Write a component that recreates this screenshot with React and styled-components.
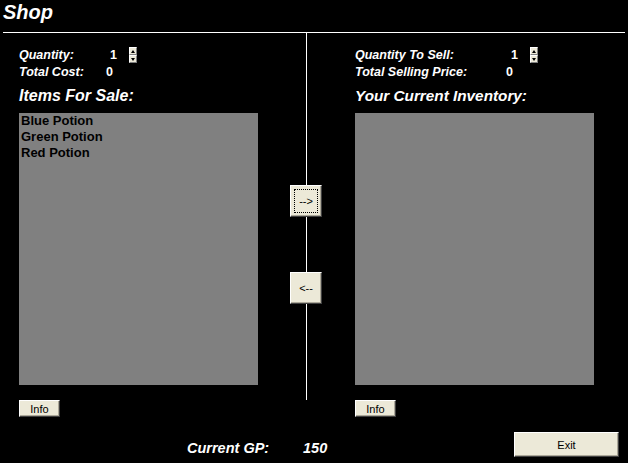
import React, { useState } from "react";
import styled, { createGlobalStyle } from "styled-components";

const items = ["Blue Potion", "Green Potion", "Red Potion"];

const Spinner = () => (
  <SpinBox>
    <SpinBtn>
      <svg width="4" height="3" viewBox="0 0 4 3">
        <polygon points="2,0 4,3 0,3" fill="#000" />
      </svg>
    </SpinBtn>
    <SpinBtn>
      <svg width="4" height="3" viewBox="0 0 4 3">
        <polygon points="0,0 4,0 2,3" fill="#000" />
      </svg>
    </SpinBtn>
  </SpinBox>
);

const App = () => {
  const [buyQty] = useState(1);
  const [sellQty] = useState(1);

  return (
    <Wrapper>
      <GlobalStyle />
      <Header>
        <Title>Shop</Title>
      </Header>
      <Rule />
      <Main>
        <Panel $left={19}>
          <StatRow>
            <Label $width={91}>Quantity:</Label>
            <Value>{buyQty}</Value>
            <Spinner />
          </StatRow>
          <StatRow>
            <Label $width={87}>Total Cost:</Label>
            <Value>0</Value>
          </StatRow>
          <Heading>Items For Sale:</Heading>
          <ListBox>
            {items.map(cv => (
              <ListItem key={cv}>{cv}</ListItem>
            ))}
          </ListBox>
          <SmallButton>Info</SmallButton>
        </Panel>

        <Divider>
          <ArrowButton $focused>--&gt;</ArrowButton>
          <ArrowButton>&lt;--</ArrowButton>
        </Divider>

        <Panel $left={33}>
          <StatRow>
            <Label $width={156}>Quantity To Sell:</Label>
            <Value>{sellQty}</Value>
            <Spinner />
          </StatRow>
          <StatRow>
            <Label $width={151}>Total Selling Price:</Label>
            <Value>0</Value>
          </StatRow>
          <Heading $size={15.3}>Your Current Inventory:</Heading>
          <ListBox />
          <SmallButton>Info</SmallButton>
        </Panel>
      </Main>
      <Footer>
        <GoldLabel>Current GP:</GoldLabel>
        <GoldValue>150</GoldValue>
        <ExitButton>Exit</ExitButton>
      </Footer>
    </Wrapper>
  );
};

export default App;

// styled components
const GlobalStyle = createGlobalStyle`
  html, body {
    margin: 0;
    padding: 0;
    background: #000;
  }
`;

const Wrapper = styled.div`
  width: 628px;
  height: 463px;
  background: #000;
  color: #fff;
  font-family: "Liberation Sans", Arial, sans-serif;
  overflow: hidden;
  display: flex;
  flex-direction: column;
`;

const Header = styled.div`
  height: 32px;
  padding-left: 3px;
  box-sizing: border-box;
`;

const Title = styled.h1`
  margin: 0;
  font-size: 20px;
  line-height: 24px;
  font-weight: bold;
  font-style: italic;
`;

const Rule = styled.div`
  height: 1px;
  margin: 0 3px;
  background: #fff;
`;

const Main = styled.div`
  display: grid;
  grid-template-columns: 290px 32px 1fr;
  align-items: start;
`;

const Panel = styled.div`
  display: flex;
  flex-direction: column;
  align-items: flex-start;
  padding-left: ${p => p.$left}px;
  padding-top: 14px;
`;

const StatRow = styled.div`
  display: flex;
  align-items: flex-start;
  height: 16px;
  margin-bottom: 1px;
`;

const Label = styled.span`
  width: ${p => p.$width}px;
  font-size: 12.5px;
  line-height: 16px;
  font-weight: bold;
  font-style: italic;
`;

const Value = styled.span`
  width: 19px;
  font-size: 12.5px;
  line-height: 16px;
  font-weight: bold;
`;

const SpinBox = styled.div`
  display: flex;
  flex-direction: column;
  width: 8px;
  height: 16px;
`;

const SpinBtn = styled.div`
  flex: 1;
  display: flex;
  align-items: center;
  justify-content: center;
  background: #ece9d8;
  box-sizing: border-box;
  border-top: 1px solid #fff;
  border-left: 1px solid #fff;
  border-right: 1px solid #808080;
  border-bottom: 1px solid #808080;
`;

const Heading = styled.h2`
  margin: 6px 0 0;
  height: 26px;
  font-size: ${p => p.$size || 16}px;
  line-height: 18px;
  font-weight: bold;
  font-style: italic;
  white-space: nowrap;
`;

const ListBox = styled.div`
  width: 239px;
  height: 272px;
  background: #808080;
  padding: 0 2px;
  box-sizing: border-box;
`;

const ListItem = styled.div`
  color: #000;
  font-size: 13px;
  line-height: 16px;
  font-weight: bold;
`;

const ButtonBase = styled.button`
  display: flex;
  align-items: center;
  justify-content: center;
  padding: 0;
  background: #ece9d8;
  color: #000;
  font-family: "Liberation Sans", Arial, sans-serif;
  font-size: 11px;
  box-sizing: border-box;
  border: none;
  border-top: 1px solid #fff;
  border-left: 1px solid #fff;
  border-right: 1px solid #404040;
  border-bottom: 1px solid #404040;
  box-shadow: inset -1px -1px 0 #aca899;
`;

const SmallButton = styled(ButtonBase)`
  margin-top: 15px;
  width: 41px;
  height: 17px;
`;

const Divider = styled.div`
  height: 367px;
  display: flex;
  flex-direction: column;
  align-items: center;
  padding-top: 152px;
  box-sizing: border-box;
  gap: 55px;
  background: linear-gradient(
    to right,
    transparent 16px,
    #fff 16px,
    #fff 17px,
    transparent 17px
  );
`;

const ArrowButton = styled(ButtonBase)`
  width: 32px;
  height: 32px;
  outline: ${p => (p.$focused ? "1px dotted #000" : "none")};
  outline-offset: -5px;
`;

const Footer = styled.div`
  display: flex;
  align-items: flex-start;
  padding: 15px 9px 0 187px;
`;

const GoldLabel = styled.span`
  width: 116px;
  margin-top: 8px;
  font-size: 14.5px;
  line-height: 17px;
  font-weight: bold;
  font-style: italic;
`;

const GoldValue = styled(GoldLabel)`
  width: auto;
`;

const ExitButton = styled(ButtonBase)`
  margin-left: auto;
  width: 105px;
  height: 25px;
`;
